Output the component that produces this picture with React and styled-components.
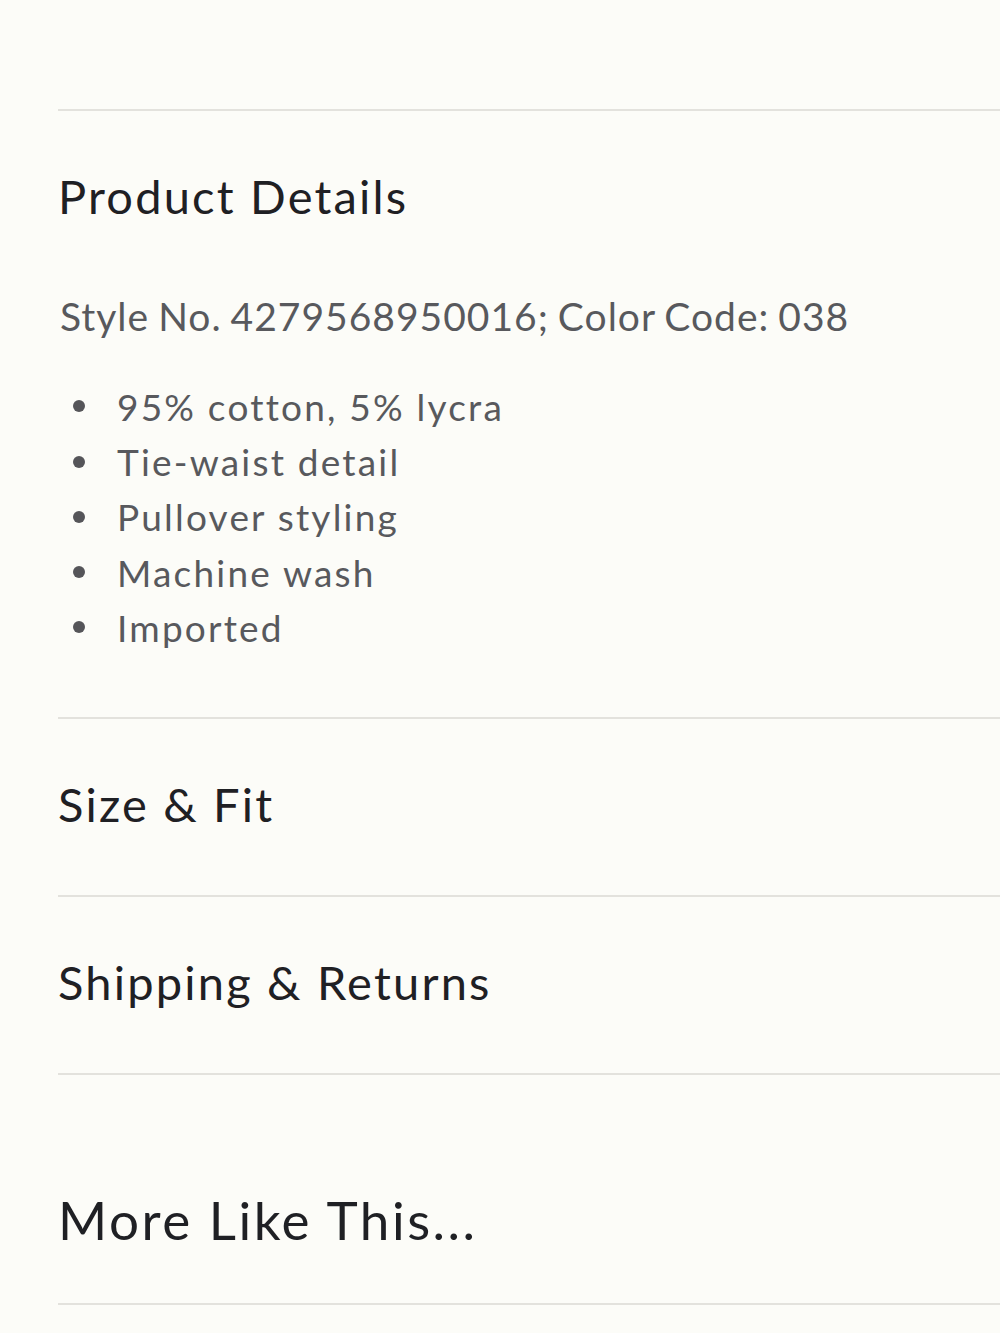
import React from "react";
import styled, { createGlobalStyle } from "styled-components";

const Global = createGlobalStyle`
  html, body { margin: 0; padding: 0; background: #fcfcf8; }
  body { font-family: Lato, "Open Sans", sans-serif; -webkit-font-smoothing: antialiased; }
  * { box-sizing: border-box; }
`;

const Page = styled.main`
  min-height: 1333px;
  padding: 109px 0 0 58px;
  background: #fcfcf8;
`;

const Section = styled.section`
  border-top: 2px solid #e3e2dd;
  &:last-child { border-bottom: 2px solid #e3e2dd; }
`;

const Heading = styled.h2`
  margin: 0;
  padding: ${(p) => (p.$big ? "119px 0 0" : "59px 0 0")};
  height: ${(p) => (p.$big ? "228px" : "176px")};
  font-size: ${(p) => (p.$big ? "53px" : "47px")};
  line-height: 52px;
  font-weight: 400;
  letter-spacing: ${(p) => (p.$big ? "2.5px" : "2.2px")};
  color: #1f2024;
`;

const Body = styled.div`
  padding: 2px 0 62px 2px;
`;

const StyleNo = styled.p`
  margin: 0 0 35px;
  font-size: 39px;
  line-height: 54.6px;
  letter-spacing: 1px;
  word-spacing: -2px;
  color: #58595d;
`;

const List = styled.ul`
  margin: 0;
  padding: 0 0 0 13px;
  list-style: none;
`;

const Item = styled.li`
  display: flex;
  align-items: center;
  height: 55.3px;
  font-size: 37px;
  letter-spacing: 2.2px;
  color: #58595d;
  &::before {
    content: "";
    width: 12px;
    height: 12px;
    border-radius: 50%;
    background: #555559;
    margin-right: 32px;
    flex: none;
  }
`;

const items = [
  "95% cotton, 5% lycra",
  "Tie-waist detail",
  "Pullover styling",
  "Machine wash",
  "Imported",
];

export default function App() {
  return (
    <>
      <Global />
      <Page>
        <Section>
          <Heading>Product Details</Heading>
          <Body>
            <StyleNo>Style No. 4279568950016; Color Code: 038</StyleNo>
            <List>
              {items.map((t) => (
                <Item key={t}>{t}</Item>
              ))}
            </List>
          </Body>
        </Section>
        <Section>
          <Heading>Size &amp; Fit</Heading>
        </Section>
        <Section>
          <Heading>Shipping &amp; Returns</Heading>
        </Section>
        <Section>
          <Heading $big>More Like This...</Heading>
        </Section>
      </Page>
    </>
  );
}
